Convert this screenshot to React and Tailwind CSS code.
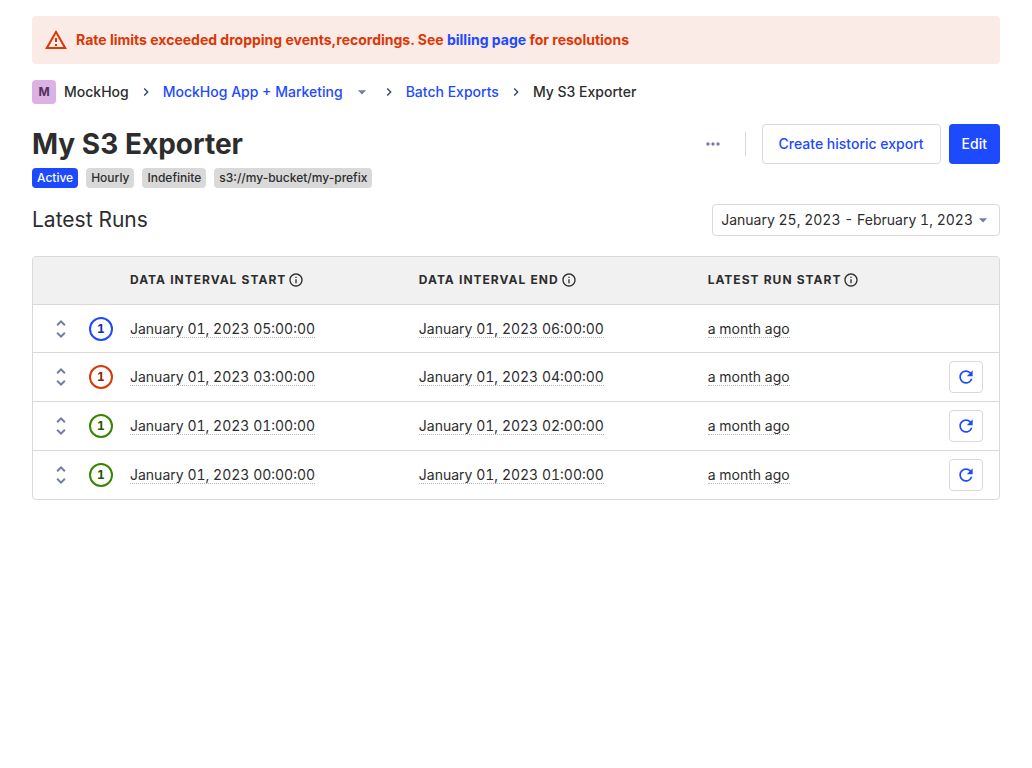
import React from 'react';
import {
  MdArrowDropDown,
  MdChevronRight,
  MdInfoOutline,
  MdMoreHoriz,
  MdRefresh,
  MdUnfoldMore,
} from 'react-icons/md';

const RUNS = [
  { start: 'January 01, 2023 05:00:00', end: 'January 01, 2023 06:00:00', status: 'running' },
  { start: 'January 01, 2023 03:00:00', end: 'January 01, 2023 04:00:00', status: 'failed' },
  { start: 'January 01, 2023 01:00:00', end: 'January 01, 2023 02:00:00', status: 'completed' },
  { start: 'January 01, 2023 00:00:00', end: 'January 01, 2023 01:00:00', status: 'completed' },
];

const STATUS_STYLES = {
  running: 'border-[#1d4aff] text-[#1330a6]',
  failed: 'border-[#db3707] text-[#8e2405]',
  completed: 'border-[#388600] text-[#245700]',
};

function WarningIcon() {
  return (
    <svg viewBox="0 0 24 24" fill="currentColor" className="size-6 shrink-0" aria-hidden="true">
      <path d="M12 2 1 21h22L12 2zm0 4 7.5 13h-15L12 6zM11 10h2v4h-2zM11 16h2v2h-2z" fillRule="evenodd" />
    </svg>
  );
}

function Banner() {
  return (
    <div role="alert" className="flex min-h-12 items-center gap-2 rounded bg-[#fbebe6] px-3 py-2 font-bold text-[#db3707]">
      <WarningIcon />
      <p>
        Rate limits exceeded dropping events,recordings. See{' '}
        <a href="#billing" className="text-[#1d4aff]">billing page</a> for resolutions
      </p>
    </div>
  );
}

function Separator() {
  return <MdChevronRight className="size-4 shrink-0 text-[#35416b]" aria-hidden="true" />;
}

function Breadcrumbs() {
  return (
    <nav aria-label="Breadcrumb" className="mt-4 flex h-6 items-center gap-[9px] font-medium">
      <span className="flex items-center gap-2">
        <span className="flex size-6 items-center justify-center rounded bg-[#dcb1e3] text-xs font-bold text-[#572e5e]">M</span>
        MockHog
      </span>
      <Separator />
      <a href="#project" className="text-[#1d4aff]">MockHog App + Marketing</a>
      <button type="button" aria-label="Switch project" className="flex w-5 items-center justify-center text-[#747ea2]">
        <MdArrowDropDown className="size-5 shrink-0" />
      </button>
      <Separator />
      <a href="#exports" className="text-[#1d4aff]">Batch Exports</a>
      <Separator />
      <span>My S3 Exporter</span>
    </nav>
  );
}

function Tag({ primary, children }) {
  return (
    <span className={`rounded px-[5px] text-xs leading-5 font-medium ${primary ? 'bg-[#1d4aff] text-white' : 'bg-[#d9d9d9]'}`}>
      {children}
    </span>
  );
}

function PageHeader() {
  return (
    <header className="mt-5">
      <div className="flex items-center justify-between">
        <h1 className="text-[28px] leading-10 font-bold">My S3 Exporter</h1>
        <div className="flex items-center">
          <button type="button" aria-label="More options" className="flex size-10 items-center justify-center text-[#747ea2]">
            <MdMoreHoriz className="size-5" />
          </button>
          <span className="mr-4 ml-3 h-6 w-px bg-[#d9d9d9]" />
          <button type="button" className="mr-2 h-10 rounded border border-[#d9d9d9] px-4 font-medium text-[#1d4aff]">
            Create historic export
          </button>
          <button type="button" className="h-10 rounded bg-[#1d4aff] px-[13px] font-medium text-white">
            Edit
          </button>
        </div>
      </div>
      <div className="mt-1 flex gap-2">
        <Tag primary>Active</Tag>
        <Tag>Hourly</Tag>
        <Tag>Indefinite</Tag>
        <Tag>s3://my-bucket/my-prefix</Tag>
      </div>
    </header>
  );
}

function HeaderCell({ children }) {
  return (
    <th scope="col" className="px-2 pb-0.5 text-left">
      <span className="flex items-center gap-0.5 text-xs font-bold tracking-[1px] uppercase">
        {children}
        <MdInfoOutline className="size-4" aria-hidden="true" />
      </span>
    </th>
  );
}

function TimeCell({ children }) {
  return (
    <td className="px-2">
      <span className="inline-block border-b border-dotted border-[#b3b3b3] leading-[17px]">{children}</span>
    </td>
  );
}

function RunRow({ run }) {
  return (
    <tr className="h-12">
      <td>
        <button type="button" aria-label="Show run details" className="mx-auto flex size-8 items-center justify-center text-[#747ea2]">
          <MdUnfoldMore className="size-6" />
        </button>
      </td>
      <td>
        <span className={`flex size-6 items-center justify-center rounded-full border-2 text-xs font-bold ${STATUS_STYLES[run.status]}`}>
          1
        </span>
      </td>
      <TimeCell>{run.start}</TimeCell>
      <TimeCell>{run.end}</TimeCell>
      <TimeCell>a month ago</TimeCell>
      <td className="pr-4 pl-2">
        {run.status !== 'running' && (
          <button type="button" aria-label="Retry run" className="my-2 flex h-8 w-full items-center justify-center rounded border border-[#d9d9d9] text-[#1d4aff]">
            <MdRefresh className="size-5 shrink-0" />
          </button>
        )}
      </td>
    </tr>
  );
}

function RunsTable() {
  return (
    <div className="mt-5 overflow-hidden rounded border border-[#d9d9d9]">
      <table className="w-full table-fixed border-separate border-spacing-0 tabular-nums [&_tbody_td]:border-t [&_tbody_td]:border-[#d9d9d9] [&_td]:py-0">
        <colgroup>
          <col className="w-14" />
          <col className="w-[33px]" />
          <col className="w-[29.9%]" />
          <col className="w-[29.9%]" />
          <col />
          <col className="w-[58px]" />
        </colgroup>
        <thead className="bg-[#f1f1f1]">
          <tr className="h-[47px]">
            <th aria-label="Expand" />
            <th aria-label="Status" />
            <HeaderCell>Data interval start</HeaderCell>
            <HeaderCell>Data interval end</HeaderCell>
            <HeaderCell>Latest run start</HeaderCell>
            <th aria-label="Actions" />
          </tr>
        </thead>
        <tbody>
          {RUNS.map((run) => (
            <RunRow key={run.start} run={run} />
          ))}
        </tbody>
      </table>
    </div>
  );
}

export default function App() {
  return (
    <main className="bg-white px-8 py-4 font-['Inter',sans-serif] text-sm text-[#2d2d2d]">
      <Banner />
      <Breadcrumbs />
      <PageHeader />
      <div className="mt-4 flex items-center justify-between">
        <h2 className="text-[21px] leading-8">Latest Runs</h2>
        <button type="button" className="flex h-8 items-center rounded border border-[#d9d9d9] pr-1.5 pl-2 tabular-nums">
          January 25, 2023 - February 1, 2023
          <MdArrowDropDown className="size-5 text-[#747ea2]" />
        </button>
      </div>
      <RunsTable />
    </main>
  );
}
